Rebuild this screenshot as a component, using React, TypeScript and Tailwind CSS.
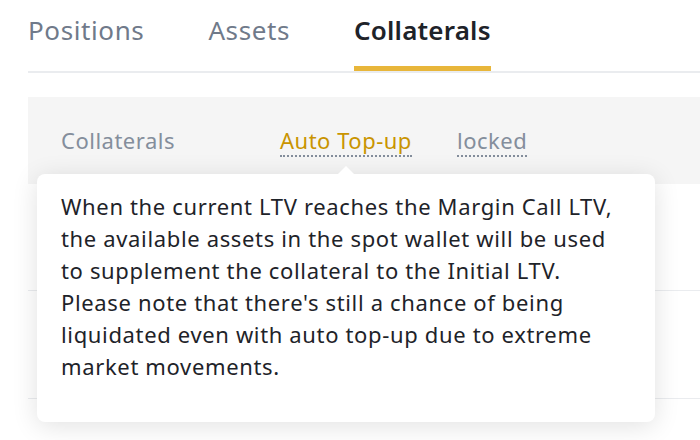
const tabs = ["Positions", "Assets", "Collaterals"];

export default function App() {
  const active = "Collaterals";

  return (
    <div
      className="relative w-[700px] h-[440px] overflow-hidden bg-white"
      style={{ fontFamily: '"Noto Sans", "Open Sans", Arial, sans-serif' }}
    >
      {/* Tabs */}
      <div className="pl-[28px]">
        <div className="flex gap-[64px] pt-[11px]">
          {tabs.map((t) => (
            <div key={t} className="flex flex-col items-stretch">
              <span
                className={
                  t === active
                    ? "text-[26px] leading-[38px] tracking-[0.2px] font-semibold text-[#1e2329]"
                    : "text-[26px] leading-[38px] tracking-[0.6px] text-[#707a8a]"
                }
              >
                {t}
              </span>
              <div className={t === active ? "mt-[17px] h-[5px] bg-[#e8b63a]" : "mt-[17px] h-[5px]"} />
            </div>
          ))}
        </div>
        <div className="h-[2px] bg-[#eaecef]" />
      </div>

      {/* Table */}
      <div className="mt-[24px] ml-[28px]">
        <div className="flex items-center h-[87px] bg-[#f5f5f5] pl-[33px] text-[22px] tracking-[0.5px] text-[#848e9c]">
          <div className="w-[219px]">Collaterals</div>
          <div className="w-[177px]">
            <span className="text-[#c99400] border-b-2 border-dotted border-[#848e9c]">Auto Top-up</span>
          </div>
          <div>
            <span className="border-b-2 border-dotted border-[#848e9c]">locked</span>
          </div>
        </div>
        <div className="h-[107px] border-b border-[#eaecef]" />
        <div className="h-[108px] border-b border-[#eaecef]" />
      </div>

      {/* Tooltip */}
      <div className="absolute left-[37px] top-[174px] w-[618px] h-[248px] rounded-[8px] bg-white shadow-[0_4px_26px_rgba(0,0,0,0.12)] pl-[24px] pr-[22px] pt-[16px]">
        <div className="absolute -top-[8px] left-[300px] w-0 h-0 border-l-[9px] border-r-[9px] border-b-[9px] border-l-transparent border-r-transparent border-b-white" />
        <p className="text-[22px] leading-[32px] tracking-[0.65px] text-[#1e2329]">
          When the current LTV reaches the Margin Call LTV, the available assets in the spot wallet will be used
          to supplement the collateral to the Initial LTV. Please note that there's still a chance of being
          liquidated even with auto top-up due to extreme market movements.
        </p>
      </div>
    </div>
  );
}
